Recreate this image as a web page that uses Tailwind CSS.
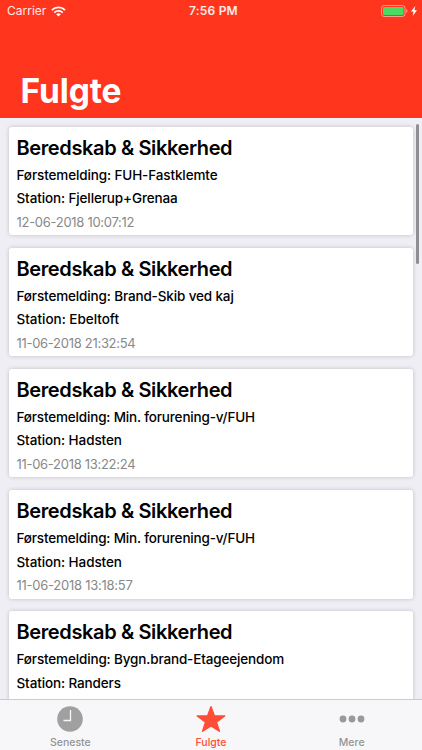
<!DOCTYPE html>
<html lang="da">
<head>
<meta charset="utf-8">
<title>Fulgte</title>
<script src="https://cdn.jsdelivr.net/npm/@tailwindcss/browser@4"></script>
</head>
<body class="w-[422px] h-[750px] overflow-hidden bg-[#efeef5] font-['Inter','Liberation_Sans',sans-serif] text-black">
<div class="relative flex h-[750px] w-[422px] flex-col overflow-hidden">
  <header class="flex h-[118px] shrink-0 flex-col justify-between bg-[#ff361d] text-white">
    <div class="grid h-[22px] grid-cols-3 items-center pl-[7px] pr-[5px]">
      <div class="flex items-center gap-[5px]">
        <span class="text-[12px] leading-[22px] tracking-[0px] text-white/90">Carrier</span>
        <svg class="h-[11px] w-[15px]" viewBox="0 0 15 11" fill="none" stroke="#fff" stroke-width="1.9"><path d="M.9 4.1a9.4 9.4 0 0 1 13.2 0M3.3 6.6a6 6 0 0 1 8.4 0"/><path d="M7.5 10.6 5.2 8.3a3.3 3.3 0 0 1 4.6 0z" fill="#fff" stroke="none"/></svg>
      </div>
      <span class="pl-[3px] text-center text-[12px] font-semibold leading-[22px] tracking-[0.2px] text-white/90">7:56 PM</span>
      <div class="flex items-center justify-end gap-[3px]">
        <svg class="h-[12px] w-[27px]" viewBox="0 0 27 12"><rect x=".5" y=".5" width="23.500" height="11" rx="2.700" fill="none" stroke="#fff" stroke-opacity=".5"/><rect x="2" y="2" width="20.500" height="8" rx="1.300" fill="#4cd964"/><path d="M25.200 4a2.200 2.200 0 0 1 0 4z" fill="#fff" fill-opacity=".5"/></svg>
        <svg class="h-[10px] w-[6px]" viewBox="0 0 6 10" fill="#fff"><path d="M4.300 0 0 5.600h2.500L1.700 10 6 4.200H3.500z"/></svg>
      </div>
    </div>
    <h1 class="pb-[6px] pl-[20.5px] text-[33.5px] font-bold leading-[41px] tracking-[-0.1px]">Fulgte</h1>
  </header>
  <main class="flex min-h-0 flex-1 flex-col gap-[12.7px] overflow-hidden pl-[8.5px] pr-[9px] pt-[8.5px]">
    <article class="h-[108.5px] shrink-0 rounded-[3px] bg-white px-[8px] pt-[7px] shadow-[0_0_4px_rgba(0,0,0,0.2)]">
      <h2 class="text-[20px] font-semibold leading-[28px] tracking-[-0.38px] whitespace-nowrap">Beredskab &amp; Sikkerhed</h2>
      <p class="mt-[2px] text-[13.5px] font-medium leading-[23.500px] tracking-[-0.12px] whitespace-nowrap">Førstemelding: FUH-Fastklemte</p>
      <p class="text-[13.5px] font-medium leading-[23.500px] tracking-[-0.12px] whitespace-nowrap">Station: Fjellerup+Grenaa</p>
      <p class="text-[13px] leading-[23.500px] tracking-[-0.29px] text-[#888]">12-06-2018 10:07:12</p>
    </article>
    <article class="h-[108.5px] shrink-0 rounded-[3px] bg-white px-[8px] pt-[7px] shadow-[0_0_4px_rgba(0,0,0,0.2)]">
      <h2 class="text-[20px] font-semibold leading-[28px] tracking-[-0.38px] whitespace-nowrap">Beredskab &amp; Sikkerhed</h2>
      <p class="mt-[2px] text-[13.5px] font-medium leading-[23.500px] tracking-[-0.14px] whitespace-nowrap">Førstemelding: Brand-Skib ved kaj</p>
      <p class="text-[13.5px] font-medium leading-[23.500px] tracking-[-0.02px] whitespace-nowrap">Station: Ebeltoft</p>
      <p class="text-[13px] leading-[23.500px] tracking-[-0.29px] text-[#888]">11-06-2018 21:32:54</p>
    </article>
    <article class="h-[108.5px] shrink-0 rounded-[3px] bg-white px-[8px] pt-[7px] shadow-[0_0_4px_rgba(0,0,0,0.2)]">
      <h2 class="text-[20px] font-semibold leading-[28px] tracking-[-0.38px] whitespace-nowrap">Beredskab &amp; Sikkerhed</h2>
      <p class="mt-[2px] text-[13.5px] font-medium leading-[23.500px] tracking-[-0.17px] whitespace-nowrap">Førstemelding: Min. forurening-v/FUH</p>
      <p class="text-[13.5px] font-medium leading-[23.500px] tracking-[-0.1px] whitespace-nowrap">Station: Hadsten</p>
      <p class="text-[13px] leading-[23.500px] tracking-[-0.29px] text-[#888]">11-06-2018 13:22:24</p>
    </article>
    <article class="h-[108.5px] shrink-0 rounded-[3px] bg-white px-[8px] pt-[7px] shadow-[0_0_4px_rgba(0,0,0,0.2)]">
      <h2 class="text-[20px] font-semibold leading-[28px] tracking-[-0.38px] whitespace-nowrap">Beredskab &amp; Sikkerhed</h2>
      <p class="mt-[2px] text-[13.5px] font-medium leading-[23.500px] tracking-[-0.17px] whitespace-nowrap">Førstemelding: Min. forurening-v/FUH</p>
      <p class="text-[13.5px] font-medium leading-[23.500px] tracking-[-0.1px] whitespace-nowrap">Station: Hadsten</p>
      <p class="text-[13px] leading-[23.500px] tracking-[-0.25px] text-[#888]">11-06-2018 13:18:57</p>
    </article>
    <article class="h-[108.5px] shrink-0 rounded-[3px] bg-white px-[8px] pt-[7px] shadow-[0_0_4px_rgba(0,0,0,0.2)]">
      <h2 class="text-[20px] font-semibold leading-[28px] tracking-[-0.38px] whitespace-nowrap">Beredskab &amp; Sikkerhed</h2>
      <p class="mt-[2px] text-[13.5px] font-medium leading-[23.500px] tracking-[-0.15px] whitespace-nowrap">Førstemelding: Bygn.brand-Etageejendom</p>
      <p class="text-[13.5px] font-medium leading-[23.500px] tracking-[-0.12px] whitespace-nowrap">Station: Randers</p>
    </article>
  </main>
  <div class="absolute left-[416px] top-[124px] h-[140px] w-[3px] rounded-full bg-[#8f8e94]"></div>
  <nav class="grid h-[51px] shrink-0 grid-cols-3 border-t border-[#cbcacf] bg-[#f7f7f9] text-[10.5px] font-medium leading-[14px] text-[#949494]">
    <div class="flex flex-col items-center pt-[6px]">
      <svg class="h-[26px] w-[26px]" viewBox="0 0 26 26"><circle cx="13" cy="13" r="12.800" fill="#a0a0a0"/><path d="M13.500 4v10.500H6.500" fill="none" stroke="#f7f7f9" stroke-width="1.300"/></svg>
      <span class="mt-[4px]">Seneste</span>
    </div>
    <div class="flex flex-col items-center pt-[6px] text-[#ff4e38]">
      <svg class="h-[26px] w-[30px]" viewBox="0 0 30 26" fill="#ff4e38" stroke="#ff4e38" stroke-width="1.500" stroke-linejoin="round"><path d="m15 .8 3.300 8.900 10.400.2-8.300 6.200 3 9.100L15 19.900l-8.400 5.300 3-9.100L1.300 9.900l10.400-.2z"/></svg>
      <span class="mt-[4px]">Fulgte</span>
    </div>
    <div class="flex flex-col items-center pt-[6px]">
      <svg class="h-[26px] w-[26px]" viewBox="0 0 26 26" fill="#999"><circle cx="4" cy="13" r="3.400"/><circle cx="13" cy="13" r="3.400"/><circle cx="22" cy="13" r="3.400"/></svg>
      <span class="mt-[4px]">Mere</span>
    </div>
  </nav>
</div>
</body>
</html>
